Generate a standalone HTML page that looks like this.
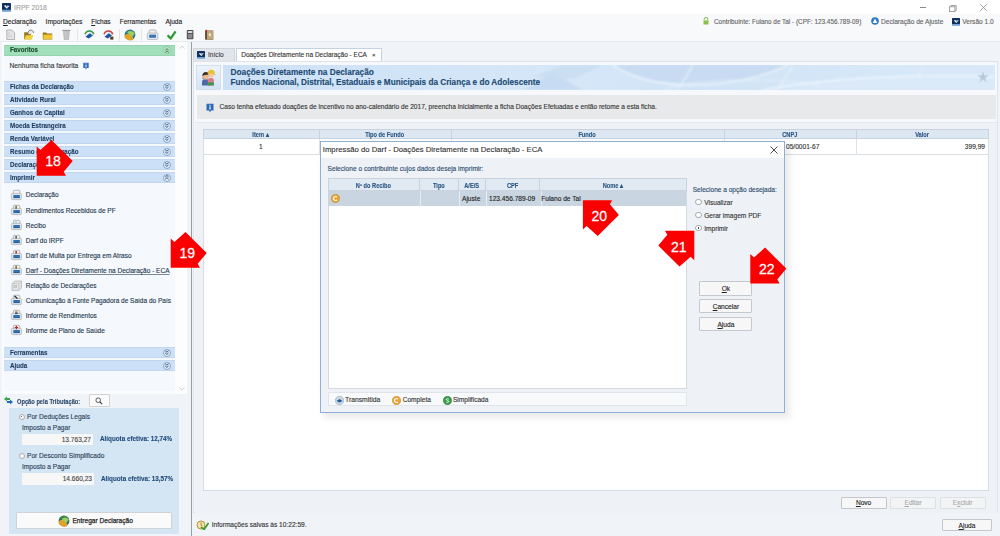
<!DOCTYPE html>
<html><head><meta charset="utf-8">
<style>
*{margin:0;padding:0;box-sizing:border-box}
html,body{width:1000px;height:536px;overflow:hidden;background:#f0f3f7;font-family:"Liberation Sans",sans-serif;font-size:6.6px;color:#333}
.t,.it,.btn,.bar span,.hd b{-webkit-text-stroke:0.12px currentColor}
.a{position:absolute;white-space:nowrap}
.t{position:absolute;white-space:nowrap;line-height:10px}
.bar{position:absolute;left:4px;width:171px;height:11.4px;background:#cce1f7;box-shadow:inset 0 1px 0 #c3d8ee,inset 0 -1px 0 #c3d8ee}
.bar span{position:absolute;left:5.5px;top:0;line-height:11.4px;font-weight:bold;font-size:7px;color:#1d3a5c;transform:scaleX(0.89);transform-origin:0 50%}
.bar i{position:absolute;right:4.2px;top:1.5px;width:8px;height:8px;border:0.8px solid #8aa5c4;border-radius:50%;background:#e6f0fb}
.it{position:absolute;left:25.7px;line-height:10px;color:#24384e;font-size:6.5px}
.ic{position:absolute;left:11px;width:11px;height:10px}
.btn{position:absolute;background:#f7f7f7;border:1px solid #cfd3d8;border-radius:1px;text-align:center;color:#222}
.hd{position:absolute;top:0;height:10px;line-height:10px;text-align:center;font-weight:bold;font-size:6.6px;color:#2a5580;border-right:1px solid #c6d2de}
.hd b{display:inline-block;transform:scaleX(0.86)}
</style></head><body>

<!-- title bar -->
<div class="a" style="left:0;top:0;width:1000px;height:14px;background:#fff"></div>
<svg class="a" style="left:2px;top:3px" width="9" height="9" viewBox="0 0 8 8"><rect width="8" height="6.2" rx="0.5" fill="#0f2f5f"/><rect y="6" width="8" height="1.8" fill="#6fa3d8"/><path d="M1.8 2.4L4.3 5L5.2 4.3L3.2 1.9Z" fill="#fff"/><path d="M4.2 2.3L7 2.6L5 3.9Z" fill="#e8f0ff"/></svg>
<div class="t" style="left:14px;top:2.5px;font-size:6.9px;color:#a2a2a2">IRPF 2018</div>
<div class="a" style="left:919.5px;top:6.5px;width:6.3px;height:0.8px;background:#8a8a8a"></div>
<svg class="a" style="left:949px;top:4.5px" width="8" height="7" viewBox="0 0 8 7"><path d="M2 1.8V0.5H7.2V5.4H5.9" stroke="#8a8a8a" fill="none" stroke-width="0.8"/><rect x="0.5" y="1.8" width="5.4" height="4.8" stroke="#8a8a8a" fill="none" stroke-width="0.8"/></svg>
<svg class="a" style="left:980px;top:4px" width="7" height="7" viewBox="0 0 7 7"><path d="M0.3 0.3L6.7 6.7M6.7 0.3L0.3 6.7" stroke="#8a8a8a" stroke-width="0.8"/></svg>

<!-- menu -->
<div class="a" style="left:0;top:14px;width:1000px;height:14px;background:#f8f9fb"></div>
<div class="t" style="left:3px;top:16.5px;color:#222;font-size:6.6px"><u>D</u>eclaração</div>
<div class="t" style="left:45.6px;top:16.5px;color:#222;font-size:6.7px">Importações</div>
<div class="t" style="left:91.2px;top:16.5px;color:#222;font-size:6.6px"><u>F</u>ichas</div>
<div class="t" style="left:119.8px;top:16.5px;color:#222;font-size:6.45px">Ferramentas</div>
<div class="t" style="left:165.4px;top:16.5px;color:#222;font-size:6.55px">Ajuda</div>
<div class="t" style="left:714px;top:16.8px;color:#666;font-size:6.4px">Contribuinte: Fulano de Tal - (CPF: 123.456.789-09)</div>
<svg class="a" style="left:703px;top:17px" width="6" height="8" viewBox="0 0 6 8"><path d="M1.2 3.5V2.2A1.8 1.8 0 0 1 4.8 2.2V3.5" stroke="#7bb33a" fill="none" stroke-width="0.9"/><rect x="0.5" y="3.5" width="5" height="4" fill="#8cc04a"/></svg>
<div class="t" style="left:881px;top:16.8px;color:#666;font-size:6.6px">Declaração de Ajuste</div>
<svg class="a" style="left:870.5px;top:17px" width="8" height="8" viewBox="0 0 8 8"><circle cx="4" cy="4" r="3.8" fill="#2d78c4"/><path d="M4 1.5L6.3 6H1.7Z" fill="#fff"/></svg>
<div class="t" style="left:962.2px;top:16.8px;color:#666;font-size:6.6px">Versão 1.0</div>
<svg class="a" style="left:952px;top:17.5px" width="8" height="8" viewBox="0 0 8 8"><rect width="8" height="6.2" rx="0.5" fill="#0f2f5f"/><rect y="6" width="8" height="1.8" fill="#6fa3d8"/><path d="M1.8 2.4L4.3 5L5.2 4.3L3.2 1.9Z" fill="#fff"/><path d="M4.2 2.3L7 2.6L5 3.9Z" fill="#e8f0ff"/></svg>

<!-- toolbar -->
<div class="a" style="left:0;top:28px;width:1000px;height:14px;background:#f8f9fb"></div><div class="a" style="left:0;top:41px;width:1000px;height:1px;background:#e6e9ee"></div>
<svg class="a" style="left:0;top:26px" width="220" height="16" viewBox="0 0 220 16">
 <path d="M6.8 4H11.8L14.6 6.8V13.5H6.8Z" fill="#e4e4e4" stroke="#a5a5a5" stroke-width="0.8"/><path d="M9 6V11.5M11 8V11.5" stroke="#c8c8c8" stroke-width="0.8"/>
 <path d="M24.2 6.2H27.2L28.2 7.2H31V13.2H24.2Z" fill="#9a7418"/><path d="M25.8 9.2H33.2L32 13.6H24.5Z" fill="#f1d23c"/><path d="M28.5 8.5A2.8 2.8 0 1 1 33.6 7" stroke="#555" stroke-width="0.7" fill="#e8e8e8"/>
 <path d="M42.8 6.5H46L47 7.5H52.2V13.4H42.8Z" fill="#9a7418"/><path d="M43.3 8.6H52V13.2H43.3Z" fill="#ecc932"/>
 <path d="M62.4 4.4H70.4" stroke="#999" stroke-width="1.1"/><path d="M63.4 5.3H69.4L68.6 13.5H64.2Z" fill="#c4c4c4" stroke="#a0a0a0" stroke-width="0.5"/>
 <rect x="77.3" y="3" width="0.7" height="12" fill="#dadada"/>
 <circle cx="89.4" cy="8.8" r="4.7" fill="#eef3f8"/><path d="M85 8.2A4.6 4.6 0 0 1 93.8 8.2" stroke="#3b9a4a" stroke-width="1.5" fill="none"/><path d="M85.5 10.8L89.8 7.2L93 9.6L88.7 12.6Z" fill="#1f56a0"/>
 <circle cx="108.4" cy="8.8" r="4.7" fill="#eef3f8"/><path d="M104 8.2A4.6 4.6 0 0 1 112.8 8.2" stroke="#c84848" stroke-width="1.5" fill="none"/><path d="M104.5 10.8L108.8 7.2L112 9.6L107.7 12.6Z" fill="#1f56a0"/><rect x="110.2" y="10.6" width="3.2" height="3" fill="#5a3a2a"/>
 <rect x="119.3" y="3" width="0.7" height="12" fill="#dadada"/>
 <circle cx="130" cy="8.8" r="5.4" fill="#2f7a8a"/><path d="M124.6 9.8C126 7.6 129 6.8 131 8.8C132.5 10.2 134 12.6 133 14C130 15 126 13.8 124.6 11.5Z" fill="#e2a22a"/><path d="M127 6C129.5 4.5 132.5 4.6 134.8 7.5L132 11Z" fill="#9ad060"/>
 <rect x="141.3" y="3" width="0.7" height="12" fill="#dadada"/>
 <path d="M149.2 8V5Q149.2 4 150.2 4H155Q156 4 156 5V8" fill="#f2f2f2" stroke="#8d8d8d" stroke-width="0.6"/><rect x="147.3" y="7" width="10.6" height="6.5" rx="1" fill="#e3e8ee" stroke="#9aa2aa" stroke-width="0.6"/><rect x="149.3" y="8.7" width="6.6" height="3" fill="#1f5f9a"/><rect x="149.8" y="9.6" width="5.6" height="0.9" fill="#5b9ad0"/>
 <path d="M167.6 9.2L170.6 12.6L175.6 5.4" stroke="#2f9a2f" stroke-width="2.3" fill="none" stroke-linejoin="round"/>
 <rect x="186.8" y="4" width="6.6" height="9.3" rx="0.8" fill="#4a4a4a"/><rect x="187.8" y="5" width="4.6" height="2" fill="#d8d8d8"/><rect x="187.8" y="7.8" width="4.6" height="4.6" fill="#8a8a8a"/>
 <rect x="205.2" y="4.6" width="8" height="9" fill="#4a3520"/><rect x="206.8" y="4.6" width="6.4" height="9" fill="#bfa57a"/><rect x="208.8" y="7.2" width="2.2" height="3" fill="#efe0b8"/><rect x="205.6" y="3.8" width="1.4" height="2.2" fill="#c02020"/>
</svg>

<!-- LEFT PANEL -->
<div class="a" style="left:2px;top:42px;width:185px;height:352px;background:#fbfcfe"></div>
<div class="a" style="left:176px;top:42px;width:11px;height:352px;background:#fdfdfd"></div>
<svg class="a" style="left:179px;top:45px" width="6" height="4" viewBox="0 0 6 4"><path d="M0.5 3.5L3 1L5.5 3.5" stroke="#c8c8c8" fill="none" stroke-width="0.8"/></svg>
<svg class="a" style="left:179px;top:387px" width="6" height="4" viewBox="0 0 6 4"><path d="M0.5 0.5L3 3L5.5 0.5" stroke="#c8c8c8" fill="none" stroke-width="0.8"/></svg>
<div class="a" style="left:4px;top:56px;width:171px;height:335px;background:#f5f8fc"></div>

<div class="bar" style="top:44.8px;height:10.8px;background:#a0dfb9;box-shadow:inset 0 1px 0 #96d2ad,inset 0 -1px 0 #96d2ad"><span style="color:#1a4a2a;line-height:10.8px">Favoritos</span><i style="background:#bfe8cc;border-color:#8fcaa2"></i></div>
<svg class="a" style="left:163.9px;top:46.5px" width="6" height="7" viewBox="0 0 6 7"><path d="M1.3 3.2L3 1.7L4.7 3.2M1.3 5.4L3 3.9L4.7 5.4" stroke="#2e5a3e" fill="none" stroke-width="0.85"/></svg>
<div class="it" style="left:9.5px;top:61px;color:#333;font-size:6.7px">Nenhuma ficha favorita</div>
<svg class="a" style="left:83px;top:62px" width="6" height="8" viewBox="0 0 6 8"><path d="M0.3 0.8H5.7V6H3.8L3 7.5L2.2 6H0.3Z" fill="#2f6ab8"/><rect x="2.5" y="2.8" width="1" height="2.5" fill="#fff"/><rect x="2.5" y="1.5" width="1" height="0.8" fill="#fff"/></svg>

<div class="bar" style="top:81px"><span>Fichas da Declaração</span><i></i></div>
<div class="bar" style="top:94px"><span>Atividade Rural</span><i></i></div>
<div class="bar" style="top:107px"><span>Ganhos de Capital</span><i></i></div>
<div class="bar" style="top:120px"><span>Moeda Estrangeira</span><i></i></div>
<div class="bar" style="top:133px"><span>Renda Variável</span><i></i></div>
<div class="bar" style="top:146px"><span>Resumo da Declaração</span><i></i></div>
<div class="bar" style="top:159px"><span>Declarações</span><i></i></div>
<div class="bar" style="top:172px"><span>Imprimir</span><i></i></div>
<div class="bar" style="top:347px"><span>Ferramentas</span><i></i></div>
<div class="bar" style="top:360px"><span>Ajuda</span><i></i></div>
<svg class="a" style="left:0;top:0" width="190" height="380" viewBox="0 0 190 380">
 <g stroke="#34557c" fill="none" stroke-width="1"><path d="M165.2 84.7L166.9 86.2L168.6 84.7M165.2 86.9L166.9 88.4L168.6 86.9"/><path d="M165.2 97.7L166.9 99.2L168.6 97.7M165.2 99.9L166.9 101.4L168.6 99.9"/><path d="M165.2 110.7L166.9 112.2L168.6 110.7M165.2 112.9L166.9 114.4L168.6 112.9"/><path d="M165.2 123.7L166.9 125.2L168.6 123.7M165.2 125.9L166.9 127.4L168.6 125.9"/><path d="M165.2 136.7L166.9 138.2L168.6 136.7M165.2 138.9L166.9 140.4L168.6 138.9"/><path d="M165.2 149.7L166.9 151.2L168.6 149.7M165.2 151.9L166.9 153.4L168.6 151.9"/><path d="M165.2 162.7L166.9 164.2L168.6 162.7M165.2 164.9L166.9 166.4L168.6 164.9"/><path d="M165.2 350.7L166.9 352.2L168.6 350.7M165.2 352.9L166.9 354.4L168.6 352.9"/><path d="M165.2 363.7L166.9 365.2L168.6 363.7M165.2 365.9L166.9 367.4L168.6 365.9"/><path d="M165.2 177.0L166.9 175.5L168.6 177.0M165.2 179.2L166.9 177.7L168.6 179.2"/></g>
</svg>

<!-- imprimir items -->
<svg class="a" style="left:0;top:180px" width="30" height="160" viewBox="0 0 30 160">
 <defs><g id="prn"><path d="M2.4 4.5V1.2Q2.4 0.3 3.3 0.3H7.8Q8.8 0.3 8.8 1.2V4.5" fill="#f4f4f4" stroke="#8d8d8d" stroke-width="0.6"/><rect x="0.4" y="3.4" width="10" height="6.2" rx="1" fill="#e3e8ee" stroke="#9aa2aa" stroke-width="0.6"/><rect x="2.4" y="5.1" width="6.4" height="2.9" fill="#1f5f9a"/><rect x="2.9" y="6.2" width="5.4" height="0.7" fill="#3f7fbf"/><rect x="1.3" y="8.6" width="8.2" height="0.7" fill="#b5bcc3"/></g></defs>
 <use href="#prn" x="11" y="10"/>
 <use href="#prn" x="11" y="25"/><rect x="15.4" y="25.8" width="1.4" height="3" fill="#6a5a1a"/>
 <use href="#prn" x="11" y="40"/><rect x="14.8" y="41.5" width="2.5" height="2" fill="#9ad0e0"/>
 <use href="#prn" x="11" y="55"/><rect x="15.4" y="56" width="1.4" height="2.5" fill="#444"/>
 <use href="#prn" x="11" y="70"/><rect x="15.4" y="71" width="1.4" height="2.6" fill="#a02020"/>
 <use href="#prn" x="11" y="85"/><rect x="15.4" y="85.8" width="1.4" height="3" fill="#6a5a1a"/>
 <path d="M12 103.5L15 101H21.5V108L19 110.5H12Z" fill="#e2e2e2" stroke="#a8a8a8" stroke-width="0.6"/><path d="M12 103.5H19V110.5M19 103.5L21.5 101" stroke="#b8b8b8" stroke-width="0.5" fill="none"/><rect x="13.5" y="105" width="3.5" height="3" fill="#c8c8c8"/>
 <use href="#prn" x="11" y="115"/><path d="M14.5 116L17.5 118.5" stroke="#222" stroke-width="1.2"/>
 <use href="#prn" x="11" y="130"/><circle cx="16.4" cy="131.8" r="1.3" fill="#c9a27a"/><rect x="15" y="132.5" width="2.8" height="1.6" fill="#3a5a7a"/>
 <use href="#prn" x="11" y="145"/><path d="M16.4 145.8V149.2M14.7 147.5H18.1" stroke="#c02020" stroke-width="1.2"/>
</svg>
<div class="it" style="top:190.4px">Declaração</div>
<div class="it" style="top:205.5px">Rendimentos Recebidos de PF</div>
<div class="it" style="top:220.6px">Recibo</div>
<div class="it" style="top:235.7px">Darf do IRPF</div>
<div class="it" style="top:250.8px">Darf de Multa por Entrega em Atraso</div>
<div class="it" style="top:265.9px;text-decoration:underline;text-decoration-color:#7d8a98">Darf - Doações Diretamente na Declaração - ECA</div>
<div class="it" style="top:281.0px">Relação de Declarações</div>
<div class="it" style="top:296.1px">Comunicação à Fonte Pagadora de Saída do País</div>
<div class="it" style="top:311.2px">Informe de Rendimentos</div>
<div class="it" style="top:326.3px">Informe de Plano de Saúde</div>

<!-- opção pela tributação -->
<svg class="a" style="left:3px;top:395px" width="11" height="11" viewBox="0 0 11 11"><path d="M1 4L4 1.5V3H7V5H4V6.5Z" fill="#3aa14a"/><path d="M10 7L7 9.5V8H4V6H7V4.5Z" fill="#1f6ab5"/></svg>
<div class="t" style="left:16.6px;top:396.6px;font-weight:bold;font-size:6.7px;color:#2d4b6d;transform:scaleX(0.855);transform-origin:0 50%">Opção pela Tributação:</div>
<div class="btn" style="left:88.6px;top:394.4px;width:21px;height:13px;background:#fbfbfb"></div>
<svg class="a" style="left:95px;top:397px" width="8" height="8" viewBox="0 0 8 8"><circle cx="3.2" cy="3.2" r="2.3" stroke="#333" fill="none" stroke-width="0.8"/><path d="M4.8 4.8L7.2 7.2" stroke="#333" stroke-width="1.1"/></svg>
<div class="a" style="left:9.4px;top:408px;width:169.2px;height:125.6px;background:#d4e5f4"></div>
<div class="a" style="left:18.5px;top:413.6px;width:6px;height:6px;border-radius:50%;background:#fff;border:0.6px solid #aaa"></div>
<div class="a" style="left:20.6px;top:415.7px;width:1.8px;height:1.8px;border-radius:50%;background:#333"></div>
<div class="t" style="left:27px;top:411.6px;color:#2a3f55;font-size:6.6px">Por Deduções Legais</div>
<div class="t" style="left:22px;top:422.6px;color:#2a3f55;font-size:6.6px">Imposto a Pagar</div>
<div class="a" style="left:22px;top:433.6px;width:71px;height:11.8px;background:#f7f7f7"></div>
<div class="t" style="left:22px;top:434.5px;width:69px;text-align:right;color:#444;font-size:6.6px">13.763,27</div>
<div class="t" style="left:100px;top:434.4px;font-weight:bold;font-size:7px;color:#1f4a7a;transform:scaleX(0.9);transform-origin:0 50%">Alíquota efetiva: 12,74%</div>
<div class="a" style="left:18.5px;top:452.6px;width:6px;height:6px;border-radius:50%;background:#fff;border:0.6px solid #aaa"></div>
<div class="t" style="left:27px;top:450.6px;color:#2a3f55;font-size:6.6px">Por Desconto Simplificado</div>
<div class="t" style="left:22px;top:462px;color:#2a3f55;font-size:6.6px">Imposto a Pagar</div>
<div class="a" style="left:22px;top:472.6px;width:72px;height:12.4px;background:#f7f7f7"></div>
<div class="t" style="left:22px;top:474px;width:70px;text-align:right;color:#444;font-size:6.6px">14.660,23</div>
<div class="t" style="left:101px;top:474px;font-weight:bold;font-size:7px;color:#1f4a7a;transform:scaleX(0.9);transform-origin:0 50%">Alíquota efetiva: 13,57%</div>
<div class="btn" style="left:16px;top:512.4px;width:156.4px;height:16.2px;background:#fafafa"></div>
<svg class="a" style="left:57.5px;top:514.6px" width="12" height="12" viewBox="0 0 12 12"><circle cx="6" cy="6" r="5.4" fill="#2f6a6a"/><path d="M0.6 7C2 4.8 5 4 7 6C8.5 7.4 10 9.8 9 11.2C6 12.2 2 11 0.8 8.7Z" fill="#e2a22a"/><path d="M3 3.2C5.5 1.7 8.5 1.8 10.8 4.7L8 8.2Z" fill="#9ad060"/><path d="M1.5 3.5C3 1.2 6 0.5 8.5 1.5L3.5 4Z" fill="#3a8a3a"/></svg>
<div class="t" style="left:72.4px;top:516.3px;color:#2a2a2a;font-size:6.6px;-webkit-text-stroke:0.25px #2a2a2a">Entregar Declaração</div>

<!-- separator -->
<div class="a" style="left:191px;top:42px;width:1px;height:494px;background:#9a9da1"></div>

<!-- MAIN -->
<div class="a" style="left:192px;top:42px;width:808px;height:494px;background:#f0f3f8"></div>
<!-- tabs -->
<div class="a" style="left:193.4px;top:48.4px;width:42px;height:12.6px;background:#e2e5e9;border:1px solid #d3d7dc;border-bottom:none"></div>
<svg class="a" style="left:197px;top:50.8px" width="8" height="8" viewBox="0 0 8 8"><rect width="8" height="6.2" rx="0.5" fill="#0f2f5f"/><rect y="6" width="8" height="1.8" fill="#6fa3d8"/><path d="M1.8 2.4L4.3 5L5.2 4.3L3.2 1.9Z" fill="#fff"/><path d="M4.2 2.3L7 2.6L5 3.9Z" fill="#e8f0ff"/></svg>
<div class="t" style="left:208px;top:49.5px;color:#444;font-size:6.6px">Início</div>
<div class="a" style="left:236.3px;top:47.8px;width:145.4px;height:13.5px;background:#fff;border:1px solid #c4d3e3;border-bottom:none"></div>
<div class="t" style="left:241.2px;top:50.2px;color:#333;font-size:6.5px">Doações Diretamente na Declaração - ECA</div>
<div class="t" style="left:372px;top:50.2px;color:#555;font-size:6px">×</div>
<div class="a" style="left:193px;top:61px;width:805px;height:452px;background:#f6f8fb;border:1px solid #dde3ea"></div>
<!-- header -->
<div class="a" style="left:196.2px;top:65.2px;width:24.6px;height:24.8px;background:linear-gradient(#edf3fa,#d2e3f5);border:0.8px solid #d3dfec"></div>
<svg class="a" style="left:194px;top:62px" width="30" height="30" viewBox="0 0 30 30"><g transform="translate(1.4 -1.2) scale(0.88)"><path d="M7.5 28V24.5Q7.5 21 11 21H13Q16.5 21 16.5 24.5V28Z" fill="#4d6aa8"/><circle cx="11.8" cy="17.5" r="3.6" fill="#eab98a"/><path d="M8 17.5Q7.6 12.8 12 12.6Q15.8 12.7 15.6 16.5Q13 15 9.5 16.5Z" fill="#3d3028"/><path d="M8 18L8.6 21H9.5Z" fill="#3d3028"/><path d="M14.2 28V22Q14.2 19.5 17 19.5H18.5Q21 19.5 21 22V28Z" fill="#e07a8a"/><path d="M14.2 24.5H21V28H14.2Z" fill="#3d9a4a"/><circle cx="17.8" cy="15.5" r="3.2" fill="#f2c8a0"/><path d="M14 15.5Q13.5 10.2 18 10.2Q22.2 10.5 22 14.5L23.3 16.5L21 15.5Q18 13.5 15 15Z" fill="#e8c030"/></g></svg>
<div class="a" style="left:223.2px;top:64.6px;width:772px;height:25.1px;background:linear-gradient(90deg,#cde1f6 0%,#d6e7f8 45%,#d0e3f6 60%,#d9e9f8 100%)"></div>
<svg class="a" style="left:223.2px;top:64.6px" width="772" height="25" viewBox="0 0 772 25"><defs><filter id="bl"><feGaussianBlur stdDeviation="0.9"/></filter></defs><g filter="url(#bl)">
<path d="M300 25L330 8L360 25Z" fill="#c3d9f0" opacity="0.8"/><path d="M310 12L340 0H380L350 14Z" fill="#c6dbf1" opacity="0.7"/>
<path d="M390 0C410 14 440 20 470 20C510 20 545 10 565 0Z" fill="#c5daf1" opacity="0.8"/>
<path d="M390 0C410 14 440 20 470 20C510 20 545 10 565 0" stroke="#eaf3fc" stroke-width="1.6" fill="none"/>
<path d="M440 25C470 14 540 12 600 20" stroke="#e6f0fb" stroke-width="1.2" fill="none" opacity="0.8"/>
<path d="M470 0L455 25M570 0L555 25M700 0L690 25" stroke="#eaf3fc" stroke-width="1.2"/>
<path d="M560 25C620 14 700 10 772 12V25Z" fill="#dceaf8" opacity="0.9"/>
<path d="M540 25C600 14 690 8 772 12" stroke="#eef5fd" stroke-width="1.6" fill="none"/>
<path d="M600 0H772V10C720 6 650 8 600 0Z" fill="#d8e8f8" opacity="0.8"/>
</g></svg>
<div class="t" style="left:230.5px;top:67px;font-weight:bold;font-size:8.3px;color:#1d4a74">Doações Diretamente na Declaração</div>
<div class="t" style="left:230.5px;top:78.2px;font-weight:bold;font-size:8.2px;color:#1d4a74">Fundos Nacional, Distrital, Estaduais e Municipais da Criança e do Adolescente</div>
<svg class="a" style="left:977px;top:71px" width="12" height="12" viewBox="0 0 12 12"><path d="M6 0.8L7.3 4.6H11.3L8.1 7L9.3 10.9L6 8.5L2.7 10.9L3.9 7L0.7 4.6H4.7Z" fill="#b9c9d9" stroke="#c5d3e0" stroke-width="0.4"/></svg>
<!-- info -->
<div class="a" style="left:196.6px;top:95px;width:799.4px;height:23.7px;background:#e8e9ea"></div>
<svg class="a" style="left:206px;top:102.5px" width="8" height="10" viewBox="0 0 8 10"><path d="M0.5 0.8H7.5V7.5H5L4 9.5L3 7.5H0.5Z" fill="#2f6ab8"/><rect x="3.4" y="3.5" width="1.2" height="3" fill="#fff"/><rect x="3.4" y="1.8" width="1.2" height="1" fill="#fff"/></svg>
<div class="t" style="left:219.5px;top:101.8px;color:#333;font-size:6.6px">Caso tenha efetuado doações de incentivo no ano-calendário de 2017, preencha inicialmente a ficha Doações Efetuadas e então retome a esta ficha.</div>
<!-- table container -->
<div class="a" style="left:195.2px;top:121.6px;width:802px;height:391px;background:#eef2f7;border-top:1px solid #e3e8ee"></div>
<div class="a" style="left:202.5px;top:129.3px;width:786px;height:361.7px;background:#fff;border:1px solid #d5dde6"></div>
<div class="a" style="left:202.5px;top:129.3px;width:786px;height:10px;background:#dde7f1;border:1px solid #c8d3df"></div>
<div class="a" style="left:202.5px;top:130.1px;width:786px;height:10px">
 <div class="hd" style="left:0;width:117px"><b>Item ▴</b></div>
 <div class="hd" style="left:117px;width:132px"><b>Tipo de Fundo</b></div>
 <div class="hd" style="left:249px;width:273px"><b>Fundo</b></div>
 <div class="hd" style="left:522px;width:132px"><b>CNPJ</b></div>
 <div class="hd" style="left:654px;width:132px;border-right:none"><b>Valor</b></div>
</div>
<div class="a" style="left:202.5px;top:139.3px;width:786px;height:16px;border-bottom:1px solid #d9dee4"></div>
<div class="a" style="left:319.4px;top:139.3px;width:1px;height:15.5px;background:#dde2e8"></div>
<div class="a" style="left:724px;top:139.3px;width:1px;height:15.5px;background:#dde2e8"></div>
<div class="a" style="left:856px;top:139.3px;width:1px;height:15.5px;background:#dde2e8"></div>
<div class="t" style="left:259px;top:142px;color:#333;font-size:6.6px">1</div>
<div class="t" style="left:786px;top:142px;color:#333;font-size:6.6px">05/0001-67</div>
<div class="t" style="left:900px;top:142px;width:85px;text-align:right;color:#333;font-size:6.6px">399,99</div>
<!-- buttons -->
<div class="btn" style="left:840.5px;top:496.5px;width:46.2px;height:12.8px;line-height:9.8px;font-size:6.6px;border-color:#c3c7cc"><u>N</u>ovo</div>
<div class="btn" style="left:890px;top:496.5px;width:46.2px;height:12.8px;line-height:9.8px;font-size:6.6px;color:#aaa;background:#f3f4f6;border-color:#dde0e4"><u>E</u>ditar</div>
<div class="btn" style="left:939.5px;top:496.5px;width:46.2px;height:12.8px;line-height:9.8px;font-size:6.6px;color:#aaa;background:#f3f4f6;border-color:#dde0e4">E<u>x</u>cluir</div>
<!-- status -->
<svg class="a" style="left:196px;top:519px" width="13" height="11" viewBox="0 0 13 11"><circle cx="5" cy="6" r="4" fill="#f6e3a8" stroke="#b08a2a" stroke-width="0.9"/><path d="M5 3.5V6.2L6.5 7" stroke="#8a6a1a" stroke-width="0.7" fill="none"/><path d="M5 8L8 10.5L12.5 4" stroke="#2d9a2d" stroke-width="1.6" fill="none"/></svg>
<div class="t" style="left:211.7px;top:519.8px;color:#333;font-size:6.6px">Informações salvas às 10:22:59.</div>
<div class="btn" style="left:941.7px;top:518.5px;width:50.6px;height:12.5px;line-height:11px;font-size:6.6px;border-color:#c3c7cc"><u>A</u>juda</div>

<!-- DIALOG -->
<div class="a" style="left:323px;top:144px;width:467px;height:274px;background:rgba(0,0,0,0.08);filter:blur(3px)"></div>
<div class="a" style="left:320.2px;top:141.3px;width:465px;height:272px;background:#eef2f7;border:1px solid #8eb0d3"></div>
<div class="a" style="left:321.2px;top:142.3px;width:463px;height:15.5px;background:#fff"></div>
<div class="t" style="left:322.8px;top:145px;color:#333;font-size:7.73px">Impressão do Darf - Doações Diretamente na Declaração - ECA</div>
<svg class="a" style="left:770px;top:146px" width="8" height="8" viewBox="0 0 8 8"><path d="M0.5 0.5L7.5 7.5M7.5 0.5L0.5 7.5" stroke="#333" stroke-width="0.9"/></svg>
<div class="t" style="left:327.6px;top:164px;color:#2d4b6d;font-size:6.6px">Selecione o contribuinte cujos dados deseja imprimir:</div>
<div class="a" style="left:327.7px;top:177.7px;width:359px;height:211.5px;background:#fff;border:1px solid #d2d9e1"></div>
<div class="a" style="left:327.7px;top:177.7px;width:359px;height:13.2px;background:#e1e9f2;border:1px solid #c8d3df"></div>
<div class="a" style="left:327.7px;top:178.5px;width:359px;height:13px">
 <div class="hd" style="left:0;width:91.9px;height:13px;line-height:13px"><b>Nº do Recibo</b></div>
 <div class="hd" style="left:91.9px;width:39.5px;height:13px;line-height:13px"><b>Tipo</b></div>
 <div class="hd" style="left:131.4px;width:26.5px;height:13px;line-height:13px"><b>A/E/S</b></div>
 <div class="hd" style="left:157.9px;width:54.9px;height:13px;line-height:13px"><b>CPF</b></div>
 <div class="hd" style="left:212.8px;width:146px;height:13px;line-height:13px;border-right:none"><b>Nome ▴</b></div>
</div>
<div class="a" style="left:328.2px;top:191px;width:358px;height:15.3px;background:#c9d5e1"></div>
<div class="a" style="left:419.6px;top:191px;width:1px;height:15.3px;background:#e8edf2"></div>
<div class="a" style="left:459.1px;top:191px;width:1px;height:15.3px;background:#e8edf2"></div>
<div class="a" style="left:485.6px;top:191px;width:1px;height:15.3px;background:#e8edf2"></div>
<div class="a" style="left:540.5px;top:191px;width:1px;height:15.3px;background:#e8edf2"></div>
<svg class="a" style="left:330.5px;top:193.5px" width="9" height="9" viewBox="0 0 9 9"><circle cx="4.5" cy="4.5" r="4.2" fill="#e9a534" stroke="#c98520" stroke-width="0.5"/><path d="M6 3.2A2 2 0 1 0 6 5.8" stroke="#fff" stroke-width="1.1" fill="none"/></svg>
<div class="t" style="left:462px;top:193.8px;color:#222;font-size:6.6px">Ajuste</div>
<div class="t" style="left:489px;top:193.8px;color:#222;font-size:6.6px">123.456.789-09</div>
<div class="t" style="left:541.2px;top:193.8px;color:#222;font-size:6.6px">Fulano de Tal</div>
<!-- legend -->
<div class="a" style="left:327.5px;top:392.4px;width:359px;height:14.1px;background:#f7f9fb;border:1px solid #e0e5eb"></div>
<svg class="a" style="left:334.5px;top:395.5px" width="9" height="9" viewBox="0 0 9 9"><circle cx="4.5" cy="4.5" r="4.2" fill="#cfd8e2" stroke="#8a9ab0" stroke-width="0.5"/><path d="M1.5 5L4.5 3L7.5 5L4.5 6.5Z" fill="#1f5aa6"/></svg>
<div class="t" style="left:345px;top:394.6px;color:#333;font-size:6.8px">Transmitida</div>
<svg class="a" style="left:392px;top:395.5px" width="9" height="9" viewBox="0 0 9 9"><circle cx="4.5" cy="4.5" r="4.2" fill="#e9a534" stroke="#c98520" stroke-width="0.5"/><path d="M6 3.2A2 2 0 1 0 6 5.8" stroke="#fff" stroke-width="1.1" fill="none"/></svg>
<div class="t" style="left:402.7px;top:394.6px;color:#333;font-size:6.6px">Completa</div>
<svg class="a" style="left:442.5px;top:395.5px" width="9" height="9" viewBox="0 0 9 9"><circle cx="4.5" cy="4.5" r="4.2" fill="#3a9a4a" stroke="#2a7a3a" stroke-width="0.5"/><path d="M5.8 3.2C5 2.5 3.2 2.6 3.3 3.6C3.4 4.6 5.8 4.3 5.8 5.5C5.8 6.5 4 6.6 3.1 5.9" stroke="#fff" stroke-width="0.9" fill="none"/></svg>
<div class="t" style="left:452.9px;top:394.6px;color:#333;font-size:6.6px">Simplificada</div>
<!-- right options -->
<div class="t" style="left:692.7px;top:185.3px;color:#2d4b6d;font-size:6.55px">Selecione a opção desejada:</div>
<div class="a" style="left:695.3px;top:199.1px;width:6.4px;height:6.4px;border-radius:50%;background:#fff;border:0.6px solid #aaa"></div>
<div class="t" style="left:704.2px;top:198.1px;color:#333;font-size:6.6px">Visualizar</div>
<div class="a" style="left:695.3px;top:211.8px;width:6.4px;height:6.4px;border-radius:50%;background:#fff;border:0.6px solid #aaa"></div>
<div class="t" style="left:704.2px;top:210.9px;color:#333;font-size:6.6px">Gerar imagem PDF</div>
<div class="a" style="left:695.3px;top:225.1px;width:6.4px;height:6.4px;border-radius:50%;background:#fff;border:0.6px solid #aaa"></div>
<div class="a" style="left:697.6px;top:227.4px;width:1.8px;height:1.8px;border-radius:50%;background:#333"></div>
<div class="t" style="left:704.2px;top:224.1px;color:#333;font-size:6.6px">Imprimir</div>
<div class="btn" style="left:699.3px;top:281.4px;width:53.2px;height:14.2px;line-height:14px;font-size:6.6px;border-color:#c4c9cf"><u>O</u>k</div>
<div class="btn" style="left:699.3px;top:298.8px;width:53.2px;height:14.3px;line-height:13.5px;font-size:6.6px;border-color:#c4c9cf"><u>C</u>ancelar</div>
<div class="btn" style="left:699.3px;top:316.5px;width:53.2px;height:14.9px;line-height:13px;font-size:6.6px;border-color:#c4c9cf"><u>A</u>juda</div>

<!-- BADGES -->
<svg class="a" style="left:0;top:0" width="1000" height="536" viewBox="0 0 1000 536">
 <defs><path id="bd" d="M14.8 0L36 21L27 31.8L29.3 35.8H0V6.4L3.7 9.9Z" fill="#fa0000"/></defs>
 <use href="#bd" x="36.7" y="140"/>
 <use href="#bd" x="170.7" y="232"/>
 <use href="#bd" x="750.3" y="247.6"/>
 <use href="#bd" transform="translate(582.9 236) scale(1 -1)"/>
 <use href="#bd" transform="translate(694.3 266.6) rotate(180)"/>
 <g fill="#fff" stroke="#fff" stroke-width="0.25" font-family="Liberation Sans" font-size="15.3" text-anchor="middle"><text transform="translate(53.1 166.05) scale(0.92 1)" x="0" y="0">18</text><text transform="translate(187.3 258.15) scale(0.92 1)" x="0" y="0">19</text><text transform="translate(766.8 274.05) scale(0.92 1)" x="0" y="0">22</text><text transform="translate(599.2 221.15) scale(0.92 1)" x="0" y="0">20</text><text transform="translate(678.8 251.75) scale(0.92 1)" x="0" y="0">21</text></g>
</svg>
</body></html>
